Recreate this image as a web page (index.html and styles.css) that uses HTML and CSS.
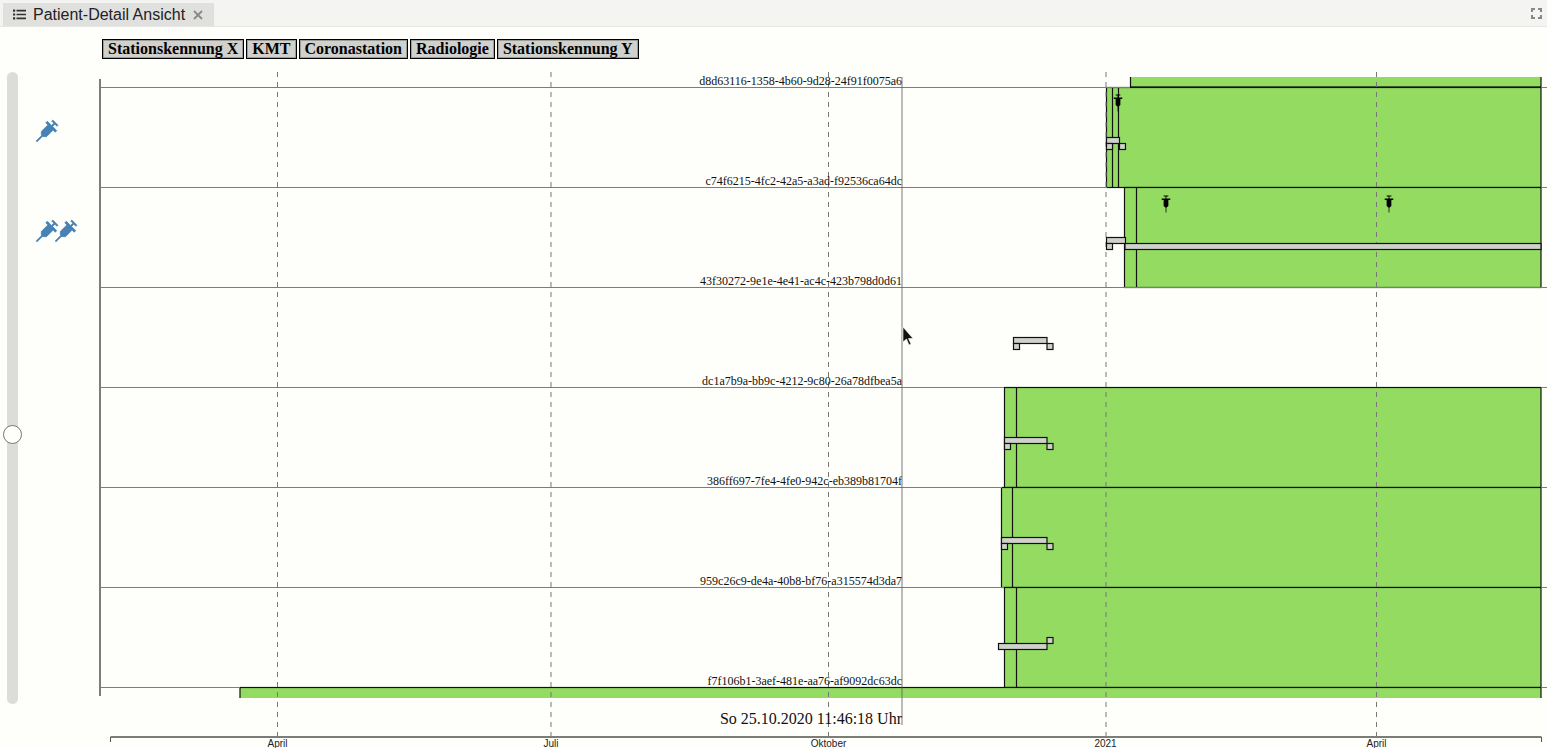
FILE: index.html
```html
<!DOCTYPE html>
<html lang="de">
<head>
<meta charset="utf-8">
<title>Patient-Detail Ansicht</title>
<link rel="stylesheet" href="styles.css">
</head>
<body>
<svg class="defs" width="0" height="0" aria-hidden="true">
  <defs>
    <symbol id="syringe" viewBox="-0.5 -0.5 19 19">
      <path d="M6.5 0h5v1H9.500v2.200h4v1.500h-2V11L9.400 13V18H8.600V13L6.500 11V4.700h-2V3.200h4V1h-2z"/>
    </symbol>
  </defs>
</svg>
<header class="tabbar">
  <div class="tab">
    <svg class="tab-icon" viewBox="0 0 13 11"><path d="M0 0.500h2.200v2.200H0zM0 4.400h2.200v2.200H0zM0 8.300h2.200v2.200H0zM3.500 0.800h9.500v1.600H3.500zM3.500 4.700h9.500v1.600H3.500zM3.500 8.600h9.500v1.600H3.500z"/></svg>
    <span class="tab-title">Patient-Detail Ansicht</span>
    <svg class="tab-close" viewBox="0 0 10 10"><path d="M1 1l8 8M9 1l-8 8"/></svg>
  </div>
  <svg class="expand" viewBox="0 0 11 11"><path d="M0 0h4v2H2v2H0zM7 0h4v4H9V2H7zM0 7h2v2h2v2H0zM9 7h2v4H7V9h2z"/></svg>
</header>
<div class="legend">
  <span class="legend-item">Stationskennung X</span>
  <span class="legend-item">KMT</span>
  <span class="legend-item">Coronastation</span>
  <span class="legend-item">Radiologie</span>
  <span class="legend-item">Stationskennung Y</span>
</div>
<main class="main">
  <div class="slider"><div class="slider-track"><div class="slider-thumb"></div></div></div>
  <div class="flags">
    <div class="flag-row"><svg class="flag"><use href="#syringe"/></svg></div>
    <div class="flag-row"><svg class="flag"><use href="#syringe"/></svg><svg class="flag"><use href="#syringe"/></svg></div>
  </div>
  <svg class="chart" viewBox="100 70 1447 678" width="1447" height="678">
    <defs><clipPath id="rows"><rect x="100" y="77" width="1447" height="621"/></clipPath></defs>
    <g clip-path="url(#rows)">
      <rect class="stay" x="1130.500" y="-13" width="410.500" height="100"/>
      <rect class="stay" x="1106.500" y="87.500" width="434.500" height="100"/>
      <path class="stay-line" d="M1112.500 87v100M1118.500 87v100"/>
      <rect class="stay" x="1124.500" y="187.500" width="416.500" height="100"/>
      <path class="stay-line" d="M1136.500 187v100"/>
      <rect class="stay" x="1004.500" y="387.500" width="536.500" height="100"/>
      <path class="stay-line" d="M1016.500 387v100"/>
      <rect class="stay" x="1001.500" y="487.500" width="539.500" height="100"/>
      <path class="stay-line" d="M1012.500 487v100"/>
      <rect class="stay" x="1004.500" y="587.500" width="536.500" height="100"/>
      <path class="stay-line" d="M1016.500 587v100"/>
      <rect class="stay" x="240" y="687.500" width="1301" height="100"/>
    </g>
    <path class="row-line" d="M101 87.500H1130M1541 87.500H1547M101 187.500H1107M1541 187.500H1547M101 287.500H1547M101 387.500H1004M1541 387.500H1547M101 487.500H1002M1541 487.500H1547M101 587.500H1004M1541 587.500H1547M101 687.500H240M1541 687.500H1547"/>
    <path class="y-axis" d="M100 79V696"/>
    <path class="grid" d="M277.500 72V738M551 72V738M828.500 72V738M1106 72V738M1376.500 72V738"/>

    <g class="bars">
      <rect x="1106.500" y="137.500" width="13" height="6"/><rect x="1106.500" y="143.500" width="6" height="6"/><rect x="1119.500" y="143.500" width="6" height="6"/>
      <rect x="1106.500" y="237.500" width="19" height="6"/><rect x="1106.500" y="243.500" width="6" height="6"/><rect x="1125" y="243.500" width="416" height="6"/>
      <rect x="1013.500" y="337.500" width="33.500" height="6"/><rect x="1013.500" y="343.500" width="6" height="6"/><rect x="1047" y="343.500" width="6" height="6"/>
      <rect x="1004.500" y="437.500" width="42.500" height="6"/><rect x="1004.500" y="443.500" width="6" height="6"/><rect x="1047" y="443.500" width="6" height="6"/>
      <rect x="1001.500" y="537.500" width="45.500" height="6"/><rect x="1001.500" y="543.500" width="6" height="6"/><rect x="1047" y="543.500" width="6" height="6"/>
      <rect x="998.500" y="643.500" width="48.500" height="6"/><rect x="1047" y="637.500" width="6" height="6"/>
    </g>
    <use href="#syringe" x="1109" y="94" width="18" height="18"/>
    <use href="#syringe" x="1157" y="195" width="18" height="18"/>
    <use href="#syringe" x="1380" y="195" width="18" height="18"/>

    <g class="row-label">
      <text x="902" y="85">d8d63116-1358-4b60-9d28-24f91f0075a6</text>
      <text x="902" y="185">c74f6215-4fc2-42a5-a3ad-f92536ca64dc</text>
      <text x="902" y="285">43f30272-9e1e-4e41-ac4c-423b798d0d61</text>
      <text x="902" y="385">dc1a7b9a-bb9c-4212-9c80-26a78dfbea5a</text>
      <text x="902" y="485">386ff697-7fe4-4fe0-942c-eb389b81704f</text>
      <text x="902" y="585">959c26c9-de4a-40b8-bf76-a315574d3da7</text>
      <text x="902" y="685">f7f106b1-3aef-481e-aa76-af9092dc63dc</text>
    </g>
    <text class="hover-date" x="902" y="724">So 25.10.2020 11:46:18 Uhr</text>
    <path class="hover-line" d="M902 77V725"/>

    <path class="x-axis" d="M110.500 737H1541.500"/>
    <path class="x-ticks" d="M110.500 737V742M1541.500 737V742"/>
    <g class="tick">
      <text x="277.500" y="747">April</text>
      <text x="551" y="747">Juli</text>
      <text x="828.500" y="747">Oktober</text>
      <text x="1105.500" y="747">2021</text>
      <text x="1376.500" y="747">April</text>
    </g>
    <path class="cursor" d="M903 327V342L906.500 339L909 345L911 344L908.500 338.500H913Z"/>
  </svg>
</main>
</body>
</html>
```
FILE: styles.css
```css
* { box-sizing: border-box; }
html, body { margin: 0; height: 100%; }
body {
  width: 1547px;
  height: 748px;
  overflow: hidden;
  background: #fefefb;
  font-family: "Liberation Sans", Arial, sans-serif;
  color: #111;
}
.defs { position: absolute; }
.tabbar {
  height: 27px;
  padding: 3px 3px 0;
  display: flex;
  justify-content: space-between;
  align-items: flex-start;
  background: #f4f4f2;
  border-bottom: 1px solid #e6e6e3;
}
.tab {
  width: 211px;
  height: 23px;
  padding-left: 10px;
  display: flex;
  align-items: center;
  background: #e0e1de;
}
.tab-icon { width: 13px; height: 11px; fill: #333; flex: none; }
.tab-title { margin-left: 7px; font-size: 16px; white-space: nowrap; color: #222; }
.tab-close {
  width: 10px; height: 10px; margin-left: 8px;
  fill: none; stroke: #888; stroke-width: 1.800;
  flex: none;
}
.expand { width: 11px; height: 11px; margin: 5px 2px 0 0; fill: #888; }

.legend {
  height: 43px;
  padding: 12px 0 0 102px;
  display: flex;
  align-items: flex-start;
  gap: 2px;
}
.legend-item {
  height: 20px;
  padding: 0 5px;
  border: 1px solid #000;
  box-shadow: inset 0 0 0 1px rgba(0, 0, 0, 0.250);
  background: #d0d0cd;
  font: bold 16px/18px "Liberation Serif", "Times New Roman", serif;
  color: #000;
  white-space: nowrap;
}

.main { display: flex; height: 678px; }
.slider { width: 25px; padding: 2px 0 0 7px; flex: none; }
.slider-track {
  position: relative;
  width: 10.500px;
  height: 632px;
  background: #dcddd9;
  border-radius: 6px;
}
.slider-thumb {
  position: absolute;
  left: -4px;
  top: 353px;
  width: 19px;
  height: 19px;
  border-radius: 50%;
  background: #fefefb;
  border: 1.300px solid #777;
}
.flags { width: 75px; padding: 47.500px 0 0 7px; flex: none; }
.flag-row { height: 100px; display: flex; align-items: flex-start; }
.flag {
  width: 28px; height: 28px; margin-right: -9.500px;
  fill: #4682b4; stroke: #4682b4; stroke-width: 0.500px;
  transform: rotate(45deg); flex: none;
}

.chart { display: block; flex: none; overflow: visible; fill: #000; }
.stay { fill: #93dc61; stroke: #111; stroke-width: 1.200; }
.stay-line { fill: none; stroke: #111; stroke-width: 1.200; }
.row-line { fill: none; stroke: #7d7d78; stroke-width: 1.200; }
.y-axis { fill: none; stroke: #7d7d78; stroke-width: 2; }
.grid { fill: none; stroke: #777; stroke-width: 1; stroke-dasharray: 5 5; }
.bars rect { fill: #d0d0cd; stroke: #111; stroke-width: 1.200; }
.row-label text { font: 12px "Liberation Serif", "Times New Roman", serif; text-anchor: end; fill: #111; }
.hover-date { font: 16px "Liberation Serif", "Times New Roman", serif; text-anchor: end; fill: #111; }
.hover-line { fill: none; stroke: rgba(90, 90, 90, 0.400); stroke-width: 2; }
.x-axis { fill: none; stroke: #7d7d78; stroke-width: 2; }
.x-ticks { fill: none; stroke: #555; stroke-width: 1; }
.tick text { font: 10px "Liberation Sans", Arial, sans-serif; text-anchor: middle; fill: #222; }
.cursor { fill: #111; stroke: #fff; stroke-width: 0.600; }
```
